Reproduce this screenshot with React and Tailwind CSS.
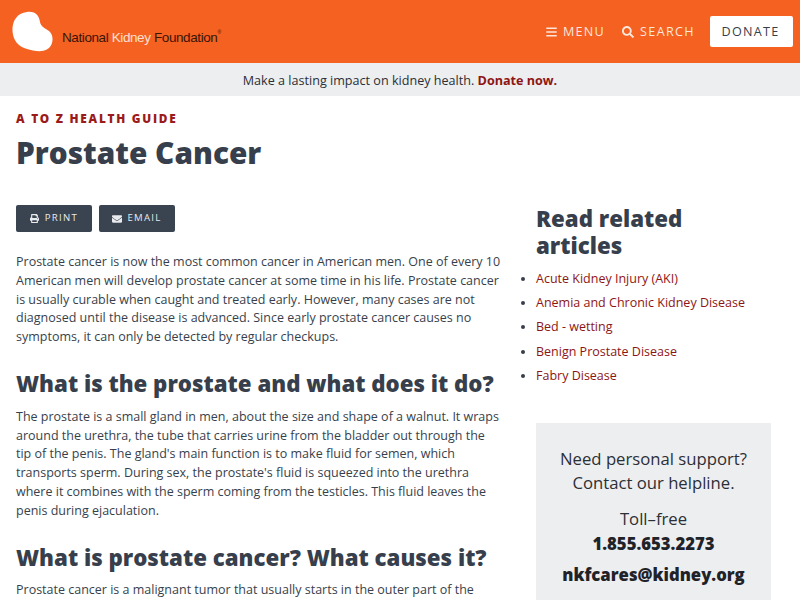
import React from "react";
import { FaBars, FaSearch, FaPrint, FaEnvelope } from "react-icons/fa";

const font = { fontFamily: '"Open Sans", sans-serif' };

function Logo() {
  return (
    <div className="flex items-end">
      <svg width="42" height="42" viewBox="0 0 42 42" className="ml-[12px] mb-[-1px]">
        <path d="M15 1 C24 0 27 5 28 11 C29 16 33 17 37 20 C42 24 41.5 33 37 37 C31 42 22 40 15 38 C7 36 1 30 0.5 20 C0 10 5 2 15 1 Z" fill="#fff" />
      </svg>
      <div className="ml-[8px] mb-[6px] text-[13.5px] leading-[16px] tracking-[-0.4px] text-[#3a1508] whitespace-nowrap" style={{ fontFamily: '"Liberation Sans", sans-serif' }}>
        National <span className="text-[#fde0cf]">Kidney</span> Foundation<sup className="text-[5px] align-super">®</sup>
      </div>
    </div>
  );
}

export default function App() {
  return (
    <div className="w-[800px] h-[600px] overflow-hidden bg-white text-[#373f4c]" style={font}>
      <header className="h-[63px] bg-[#f46121] flex items-center justify-between">
        <Logo />
        <div className="flex items-center text-white">
          <div className="flex items-center pt-[1px] text-[12.6px] tracking-[1.25px] text-[#fde6da]">
            <FaBars className="w-[11px] h-[12px] mr-[6px]" />
            <span>MENU</span>
          </div>
          <div className="flex items-center pt-[1px] text-[12.6px] tracking-[1.35px] text-[#fde6da] ml-[17px]">
            <FaSearch className="w-[12px] h-[12px] mr-[6px]" />
            <span>SEARCH</span>
          </div>
          <div className="ml-[15px] mr-[7px] w-[83px] h-[31px] pr-[2px] pt-[1px] bg-white rounded-[2px] flex items-center justify-center text-[12.6px] tracking-[1.3px] text-[#373f4c]">
            DONATE
          </div>
        </div>
      </header>
      <div className="h-[33px] pt-[3px] bg-[#edeef0] flex items-center justify-center text-[12.6px] text-[#2b2f36]">
        <span>Make a lasting impact on kidney health. <b className="text-[#8d1515]">Donate now.</b></span>
      </div>
      <main className="flex pl-[16px]">
        <div className="w-[485px]">
          <div className="pt-[13px] text-[11.8px] leading-[18px] font-extrabold tracking-[1.75px] text-[#9b1a1a]">A TO Z HEALTH GUIDE</div>
          <h1 className="mt-[6px] text-[29.75px] leading-[40px] font-extrabold text-[#373f4c]">Prostate Cancer</h1>
          <div className="mt-[32px] flex gap-[7px]">
            <div className="w-[76px] h-[27px] bg-[#3a4350] rounded-[2px] flex items-center justify-center text-[9.6px] tracking-[1.3px] text-[#e8eaed]">
              <FaPrint className="w-[9px] h-[9px] mr-[6px]" />PRINT
            </div>
            <div className="w-[76px] h-[27px] bg-[#3a4350] rounded-[2px] flex items-center justify-center text-[9.6px] tracking-[1.3px] text-[#e8eaed]">
              <FaEnvelope className="w-[10px] h-[10px] mr-[5px]" />EMAIL
            </div>
          </div>
          <p className="mt-[21px] text-[12.5px] leading-[18.75px]">
            Prostate cancer is now the most common cancer in American men. One of every 10 American men will develop prostate cancer at some time in his life. Prostate cancer is usually curable when caught and treated early. However, many cases are not diagnosed until the disease is advanced. Since early prostate cancer causes no symptoms, it can only be detected by regular checkups.
          </p>
          <h2 className="mt-[21px] text-[22.25px] leading-[32px] font-extrabold whitespace-nowrap">What is the prostate and what does it do?</h2>
          <p className="mt-[8px] text-[12.5px] leading-[18.75px]">
            The prostate is a small gland in men, about the size and shape of a walnut. It wraps around the urethra, the tube that carries urine from the bladder out through the tip of the penis. The gland's main function is to make fluid for semen, which transports sperm. During sex, the prostate's fluid is squeezed into the urethra where it combines with the sperm coming from the testicles. This fluid leaves the penis during ejaculation.
          </p>
          <h2 className="mt-[22px] text-[22.25px] leading-[32px] font-extrabold whitespace-nowrap">What is prostate cancer? What causes it?</h2>
          <p className="mt-[7px] text-[12.5px] leading-[18.75px]">
            Prostate cancer is a malignant tumor that usually starts in the outer part of the prostate.
          </p>
        </div>
        <aside className="ml-[35px] w-[235px] pt-[109px]">
          <h2 className="text-[22.25px] leading-[27px] font-extrabold">Read related articles</h2>
          <ul className="mt-[8px] list-disc text-[12.5px] leading-[24.2px] text-[#8d1515] whitespace-nowrap marker:text-[#373f4c]">
            <li>Acute Kidney Injury (AKI)</li>
            <li>Anemia and Chronic Kidney Disease</li>
            <li>Bed - wetting</li>
            <li>Benign Prostate Disease</li>
            <li>Fabry Disease</li>
          </ul>
          <div className="mt-[35px] h-[200px] bg-[#edeef0] pt-[24px] text-center text-[#2b2f36]">
            <div className="text-[16.7px] leading-[24px]">Need personal support?<br />Contact our helpline.</div>
            <div className="mt-[12px] text-[16.7px] leading-[24px]">Toll–free</div>
            <div className="text-[16.7px] leading-[25px] font-extrabold text-[#1f2329]">1.855.653.2273</div>
            <div className="mt-[6px] text-[16.7px] leading-[25px] font-extrabold text-[#1f2329]">nkfcares@kidney.org</div>
          </div>
        </aside>
      </main>
    </div>
  );
}
